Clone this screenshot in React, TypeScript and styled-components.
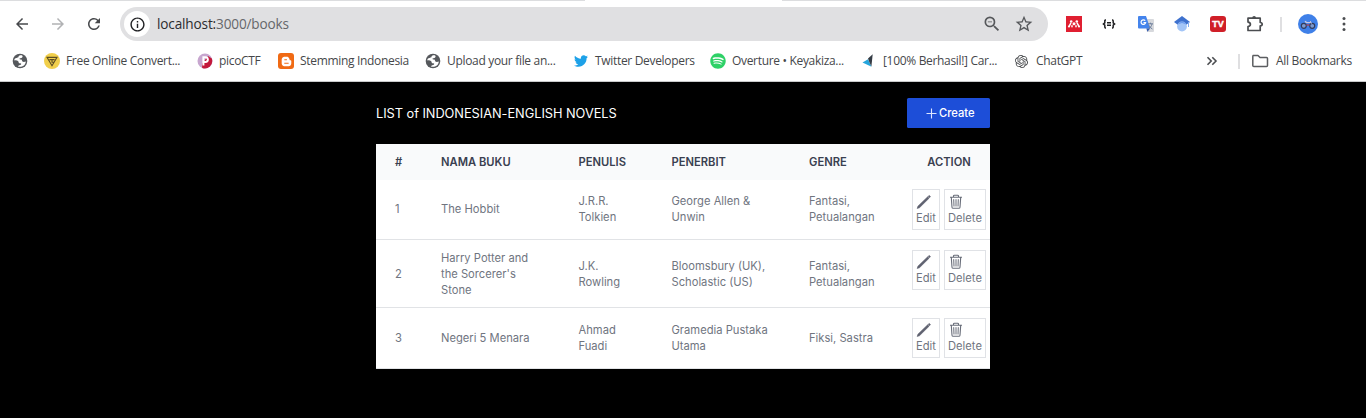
import React from "react";
import styled, { createGlobalStyle } from "styled-components";
import { FaTwitter, FaSpotify, FaBloggerB } from "react-icons/fa";
import { SiOpenai } from "react-icons/si";
import { MdArrowBack, MdArrowForward, MdRefresh, MdStarOutline, MdZoomOut, MdInfoOutline } from "react-icons/md";

const GlobalStyle = createGlobalStyle`
  * { box-sizing: border-box; }
  html, body { margin: 0; background: #000; }
  body { overflow: hidden; }
  svg { display: block; flex: none; }
`;

const Browser = styled.div`
  width: 1366px;
  height: 418px;
  display: flex;
  flex-direction: column;
  background: #000;
`;

const Chrome = styled.header`
  height: 82px;
  background: #fff;
  border-bottom: 1px solid #c9cacb;
  color: #45474a;
  font-family: "Open Sans", "Noto Sans", sans-serif;
`;

const TabEdge = styled.div`
  height: 1px;
  background: linear-gradient(90deg, #dcdddf 585px, #fff 585px 782px, #dcdddf 782px);
`;

const NavBar = styled.div`
  height: 40px;
  padding-top: 6px;
  display: flex;
`;

const NavButtons = styled.div`
  width: 120px;
  height: 34px;
  display: flex;
  align-items: center;
  padding-left: 13px;
  gap: 18px;
`;

const AddressBar = styled.div`
  width: 928px;
  height: 34px;
  border-radius: 17px;
  background: #e0e0e2;
  display: flex;
  align-items: center;
  padding: 0 14px 0 4px;
`;

const SiteInfo = styled.span`
  width: 26px;
  height: 26px;
  border-radius: 50%;
  background: #fff;
  display: flex;
  align-items: center;
  justify-content: center;
  color: #202124;
`;

const Url = styled.span`
  margin-left: 7px;
  flex: 1;
  font-size: 13.6px;
  line-height: 20px;
  letter-spacing: -0.15px;
  color: #66676a;
  b { font-weight: 400; color: #2c2d30; }
`;

const AddressActions = styled.span`
  display: flex;
  align-items: center;
  gap: 12px;
  color: #56585b;
`;

const Extensions = styled.div`
  height: 34px;
  flex: 1;
  display: flex;
  align-items: center;
  padding-left: 18px;
`;

const ExtSlot = styled.span<{ $w?: number }>`
  width: ${(p) => p.$w ?? 36}px;
  height: 20px;
  display: flex;
  align-items: center;
`;

const Divider = styled.span`
  width: 2px;
  height: 15px;
  background: #dfdfe1;
`;

const BookmarkBar = styled.nav`
  height: 40px;
  display: flex;
  align-items: center;
  padding-left: 12px;
`;

const Bookmark = styled.span<{ $w: number; $gap?: number; $spacing?: number }>`
  width: ${(p) => p.$w}px;
  display: flex;
  align-items: center;
  gap: ${(p) => p.$gap ?? 6}px;
  font-size: 12px;
  line-height: 16px;
  letter-spacing: ${(p) => p.$spacing ?? -0.32}px;
  white-space: nowrap;
`;

const Page = styled.main`
  width: 614px;
  margin: 0 auto;
  padding-top: 16px;
  font-family: Inter, sans-serif;
`;

const PageHeader = styled.div`
  height: 30px;
  display: flex;
  align-items: center;
  justify-content: space-between;
  margin-bottom: 16px;
`;

const Title = styled.h1`
  margin: 0;
  font-size: 12.8px;
  font-weight: 400;
  letter-spacing: -0.04px;
  color: #fff;
`;

const CreateButton = styled.button`
  width: 83px;
  height: 30px;
  border: 0;
  border-radius: 1.6px;
  background: #1d4ed8;
  color: #fff;
  font: 500 11.2px/16px Inter, sans-serif;
  display: flex;
  align-items: center;
  gap: 2px;
  padding: 0 0 0 19px;
`;

const Table = styled.section`
  background: #fff;
  color: #70757f;
  font-size: 11.2px;
  line-height: 16px;
`;

const Row = styled.div<{ $h: number }>`
  height: ${(p) => p.$h}px;
  display: grid;
  grid-template-columns: 46px 137.5px 93px 137.5px 118px 82px;
  align-items: center;
  border-bottom: 1px solid #e1e3e6;
`;

const HeadRow = styled(Row)`
  background: #f9fafb;
  border-bottom: 0;
  color: #3a4050;
  font-weight: 600;
`;

const Cell = styled.div`
  padding: 0 19px;
`;

const ActionHead = styled.div`
  text-align: center;
`;

const Lines = styled.div<{ $lift?: number }>`
  padding-left: 19px;
  padding-bottom: ${(p) => p.$lift ?? 0}px;
  white-space: pre-line;
`;

const Actions = styled.div<{ $top: number }>`
  align-self: start;
  display: flex;
  gap: 4px;
  padding: ${(p) => p.$top}px 0 0 4px;
`;

const ActionButton = styled.button<{ $w: number; $h: number }>`
  width: ${(p) => p.$w}px;
  height: ${(p) => p.$h}px;
  padding: 0 0 0 3px;
  border: 1px solid #e0e2e6;
  background: #fff;
  color: #70757f;
  font: 400 11.2px/16px Inter, sans-serif;
  text-align: left;
`;

const Globe = () => (
  <svg width="16" height="16" viewBox="0 0 16 16">
    <circle cx="8" cy="8" r="7.3" fill="#55585c" />
    <path d="M9.8 2.2C7.6 2 6.6 2.7 6.4 4c-.1 1-1 .8-2 .9C3 5 2.3 6 2.2 7.4c1.8-.3 3.2 0 4 .9.6.7.2 1.5 1 1.9.7.3 1.7-.1 2 .6.2.8-.8 1.2-1.9 1.5-.8.3-1.2.8-1.1 1.4 4 .8 7.3-1.6 7.6-5.3-1.2.6-2.6.7-3.4 0-.7-.7-.3-1.5-1.1-1.9-.7-.3-1.6 0-1.8-.6-.1-.7.8-.8 1.8-1 1-.3 1.3-1 1.3-2z" fill="#fff" />
  </svg>
);

const Converter = () => (
  <svg width="16" height="16" viewBox="0 0 16 16">
    <circle cx="8" cy="8" r="8" fill="#f1cf4b" />
    <path d="M3 4.4h10L8 12.7zM5.4 6.6h5.2M8 6.6v2.6h2" fill="none" stroke="#5c4d22" strokeWidth="1.1" />
  </svg>
);

const Pico = () => (
  <svg width="16" height="16" viewBox="0 0 16 16">
    <circle cx="8" cy="8" r="7.5" fill="#c7a6cf" />
    <path d="M11 3 14.8 5.4a7.5 7.5 0 0 1-9.6 9.5L5 11z" fill="#c3183b" />
    <path d="M6.4 12.5V4.2h2.1a2.3 2.3 0 0 1 0 4.7H6.4" fill="none" stroke="#fff" strokeWidth="2" />
  </svg>
);

const BloggerTile = styled.span`
  width: 16px;
  height: 16px;
  border-radius: 3px;
  background: #f06a14;
  color: #fff;
  display: flex;
  align-items: center;
  justify-content: center;
`;

const SpotifyTile = styled.span`
  color: #2ed167;
  border-radius: 50%;
  background: #fff;
`;

const BlueWing = () => (
  <svg width="16" height="16" viewBox="0 0 16 16">
    <path d="M1.5 9.4 7 6.2l3.5 7.5z" fill="#25a5dc" />
    <path d="M11.7 1.3 7 5.4 8.3 9l2.1 4.5z" fill="#343b44" />
  </svg>
);

const Folder = () => (
  <svg width="18" height="16" viewBox="0 0 18 16" fill="none" stroke="#5b5d60" strokeWidth="1.5" strokeLinejoin="round">
    <path d="M2 2.5h5l2 2h6.5q1 0 1 1v7q0 1-1 1H2.8q-1 0-1-1v-9q0-1 .8-1z" />
  </svg>
);

const Mendeley = () => (
  <svg width="16" height="16" viewBox="0 0 16 16">
    <path fill="#e01f31" d="M0 0h16v16H0z" />
    <g fill="#fff">
      <circle cx="5.2" cy="5.5" r="1.3" />
      <circle cx="10.8" cy="5.5" r="1.3" />
      <circle cx="8" cy="7.7" r="1.5" />
      <circle cx="3" cy="10.5" r="1.1" />
      <circle cx="13" cy="10.5" r="1.1" />
    </g>
    <path d="M3.2 10.2 4.7 7.4M12.8 10.2l-1.5-2.8M6 10.8V9.7M10 10.8V9.7" fill="none" stroke="#fff" strokeWidth="1.5" strokeLinecap="round" />
  </svg>
);

const Braces = () => (
  <svg width="14" height="12" viewBox="0 0 14 12" fill="none" stroke="#1f2022" strokeWidth="1.5">
    <path d="M4 2H3.5Q2.8 2 2.8 3v1.8L1.4 6l1.4 1.2V9q0 1 .7 1H4M10 2h.5q.7 0 .7 1v1.8L12.6 6l-1.4 1.2V9q0 1-.7 1H10M5 4.7h4M5 7.3h4" />
  </svg>
);

const Translate = () => (
  <svg width="17" height="16" viewBox="0 0 17 16">
    <path d="M6 3h9q1 0 1 1v11q0 1-1 1H9z" fill="#d7d9dd" />
    <path d="M1 0h7l4.2 12.5H1q-1 0-1-1V1q0-1 1-1z" fill="#4484ec" />
    <path d="m8.5 12.5 3.7 0-2.8 3.3z" fill="#2f58ae" />
    <path d="M7.2 4.7a2.3 2.3 0 1 0 .4 2H5.5" fill="none" stroke="#fff" strokeWidth="1.2" />
    <path d="M9.7 7.8H15M12.5 6.7v1.1M14 8c-.4 2-1.8 3.7-3.5 4.7M11 9.4c.8 1.7 2 2.8 3.4 3.6" fill="none" stroke="#6d7e9b" strokeWidth="1" />
  </svg>
);

const Scholar = () => (
  <svg width="16" height="16" viewBox="0 0 16 16">
    <path d="M8 0 0 6l4 3 8 0 4-3z" fill="#3e71ce" />
    <circle cx="8" cy="10.5" r="4.9" fill="#a3c5f7" />
    <path d="M3.6 8.5a4.9 4.9 0 0 1 8.8 0L8 7z" fill="#6c9cee" />
    <path d="M14.5 6v5" stroke="#7faaef" strokeWidth="1" />
  </svg>
);

const TvTile = styled.span`
  width: 16px;
  height: 16px;
  border-radius: 3px;
  background: #d01f28;
  color: #fff;
  font: 700 9px/16px "Liberation Sans", sans-serif;
  text-align: center;
  -webkit-text-stroke: 0.4px #fff;
`;

const Puzzle = () => (
  <svg width="18" height="18" viewBox="0 0 18 18" fill="none" stroke="#4b4d50" strokeWidth="1.7" strokeLinejoin="round">
    <path d="M2 3.2h12.2v4.3q2 .1 2 1.7t-2 1.7v4.6H2v-4q2.4-.5 2.4-2.3T2 7.1z" />
    <path d="M6.2 3a1.9 1.9 0 0 1 3.8 0z" fill="#4b4d50" stroke="none" />
  </svg>
);

const Avatar = () => (
  <svg width="20" height="20" viewBox="0 0 20 20">
    <circle cx="10" cy="10" r="10" fill="#3f80e8" />
    <g fill="none" stroke="#333b5a" strokeWidth="1.2">
      <circle cx="5.8" cy="11.8" r="2.5" fill="#7c9bd0" />
      <circle cx="14.2" cy="11.8" r="2.5" fill="#7c9bd0" />
    </g>
    <path d="M7.4 8.6h5.2M6.8 7.4h1.6M12.4 7.2l1 2.4" fill="none" stroke="#d9cfdc" strokeWidth="1" />
    <path d="M8.4 11h3" stroke="#b43b4c" strokeWidth="1.2" />
  </svg>
);

const Dots = () => (
  <svg width="4" height="16" viewBox="0 0 4 16" fill="#4b4d50">
    <circle cx="2" cy="2.5" r="1.5" />
    <circle cx="2" cy="8" r="1.5" />
    <circle cx="2" cy="13.5" r="1.5" />
  </svg>
);

const Chevrons = () => (
  <svg width="12" height="10" viewBox="0 0 12 10" fill="none" stroke="#4b4d50" strokeWidth="1.6">
    <path d="m1.5 1.2 3.7 3.8-3.7 3.8M6.3 1.2 10 5 6.3 8.8" />
  </svg>
);

const Plus = () => (
  <svg width="11" height="11" viewBox="0 0 11 11" stroke="#dce5ff" strokeWidth="1.1">
    <path d="M5.5.5v10M.5 5.5h10" />
  </svg>
);

const Pencil = () => (
  <svg width="16" height="16" viewBox="0 0 16 16">
    <path d="m1.2 14.5.7-2.3 9.8-9.4 1.4 1.4-9.6 9.5zM12.2 2.3l.7-.6q.4-.4.8 0l.5.5q.4.4 0 .8l-.7.7z" fill="#5f6270" stroke="#5f6270" strokeWidth=".6" />
  </svg>
);

const Trash = () => (
  <svg width="16" height="16" viewBox="0 0 16 16" fill="none" stroke="#686d79">
    <path d="M2 3.2h12M5.5 2.9V2.1q0-.9.9-.9h3.2q.9 0 .9.9v.8M3.3 3.4l.7 9.8q.1 1.1 1.1 1.1h5.8q1 0 1.1-1.1l.7-9.8" strokeWidth="1.1" />
    <path d="m5.7 5.2.3 7.3M8 5.2v7.3M10.3 5.2l-.3 7.3" strokeWidth="1" />
  </svg>
);

const books = [
  { name: "The Hobbit", author: "J.R.R.\nTolkien", publisher: "George Allen &\nUnwin", genre: "Fantasi,\nPetualangan", h: 60, top: 9, bh: 41, lift: 1 },
  { name: "Harry Potter and\nthe Sorcerer's\nStone", author: "J.K.\nRowling", publisher: "Bloomsbury (UK),\nScholastic (US)", genre: "Fantasi,\nPetualangan", h: 68, top: 10, bh: 40, lift: 0 },
  { name: "Negeri 5 Menara", author: "Ahmad\nFuadi", publisher: "Gramedia Pustaka\nUtama", genre: "Fiksi, Sastra", h: 61, top: 10, bh: 40, lift: 0 },
];

export default function App() {
  return (
    <Browser>
      <GlobalStyle />
      <Chrome>
        <TabEdge />
        <NavBar>
          <NavButtons>
            <MdArrowBack size={18} color="#47494c" />
            <MdArrowForward size={18} color="#b1b2b4" />
            <MdRefresh size={18} color="#47494c" />
          </NavButtons>
          <AddressBar>
            <SiteInfo><MdInfoOutline size={17} /></SiteInfo>
            <Url><b>localhost:</b>3000/books</Url>
            <AddressActions>
              <MdZoomOut size={20} />
              <MdStarOutline size={20} />
            </AddressActions>
          </AddressBar>
          <Extensions>
            <ExtSlot><Mendeley /></ExtSlot>
            <ExtSlot><Braces /></ExtSlot>
            <ExtSlot><Translate /></ExtSlot>
            <ExtSlot><Scholar /></ExtSlot>
            <ExtSlot><TvTile>TV</TvTile></ExtSlot>
            <ExtSlot $w={34}><Puzzle /></ExtSlot>
            <ExtSlot $w={18}><Divider /></ExtSlot>
            <ExtSlot $w={44}><Avatar /></ExtSlot>
            <Dots />
          </Extensions>
        </NavBar>
        <BookmarkBar>
          <Bookmark $w={32}><Globe /></Bookmark>
          <Bookmark $w={153}><Converter />Free Online Convert...</Bookmark>
          <Bookmark $w={81}><Pico />picoCTF</Bookmark>
          <Bookmark $w={147}><BloggerTile><FaBloggerB size={11} /></BloggerTile>Stemming Indonesia</Bookmark>
          <Bookmark $w={149}><Globe />Upload your file an...</Bookmark>
          <Bookmark $w={136} $gap={7}><FaTwitter size={14} color="#1da1e8" />Twitter Developers</Bookmark>
          <Bookmark $w={151}><SpotifyTile><FaSpotify size={16} /></SpotifyTile>Overture • Keyakiza...</Bookmark>
          <Bookmark $w={154}><BlueWing />[100% Berhasil!] Car...</Bookmark>
          <Bookmark $w={191} $gap={8}><SiOpenai size={13} />ChatGPT</Bookmark>
          <Bookmark $w={32}><Chevrons /></Bookmark>
          <Bookmark $w={13}><Divider /></Bookmark>
          <Bookmark $w={105} $gap={7}><Folder />All Bookmarks</Bookmark>
        </BookmarkBar>
      </Chrome>
      <Page>
        <PageHeader>
          <Title>LIST of INDONESIAN-ENGLISH NOVELS</Title>
          <CreateButton><Plus />Create</CreateButton>
        </PageHeader>
        <Table>
          <HeadRow $h={36}>
            <Cell>#</Cell>
            <Cell>NAMA BUKU</Cell>
            <Cell>PENULIS</Cell>
            <Cell>PENERBIT</Cell>
            <Cell>GENRE</Cell>
            <ActionHead>ACTION</ActionHead>
          </HeadRow>
          {books.map((b, i) => (
            <Row key={b.name} $h={b.h}>
              <Lines $lift={b.lift}>{i + 1}</Lines>
              <Lines $lift={b.lift}>{b.name}</Lines>
              <Lines $lift={b.lift}>{b.author}</Lines>
              <Lines $lift={b.lift}>{b.publisher}</Lines>
              <Lines $lift={b.lift}>{b.genre}</Lines>
              <Actions $top={b.top}>
                <ActionButton $w={28} $h={b.bh}><Pencil />Edit</ActionButton>
                <ActionButton $w={42} $h={b.bh}><Trash />Delete</ActionButton>
              </Actions>
            </Row>
          ))}
        </Table>
      </Page>
    </Browser>
  );
}
